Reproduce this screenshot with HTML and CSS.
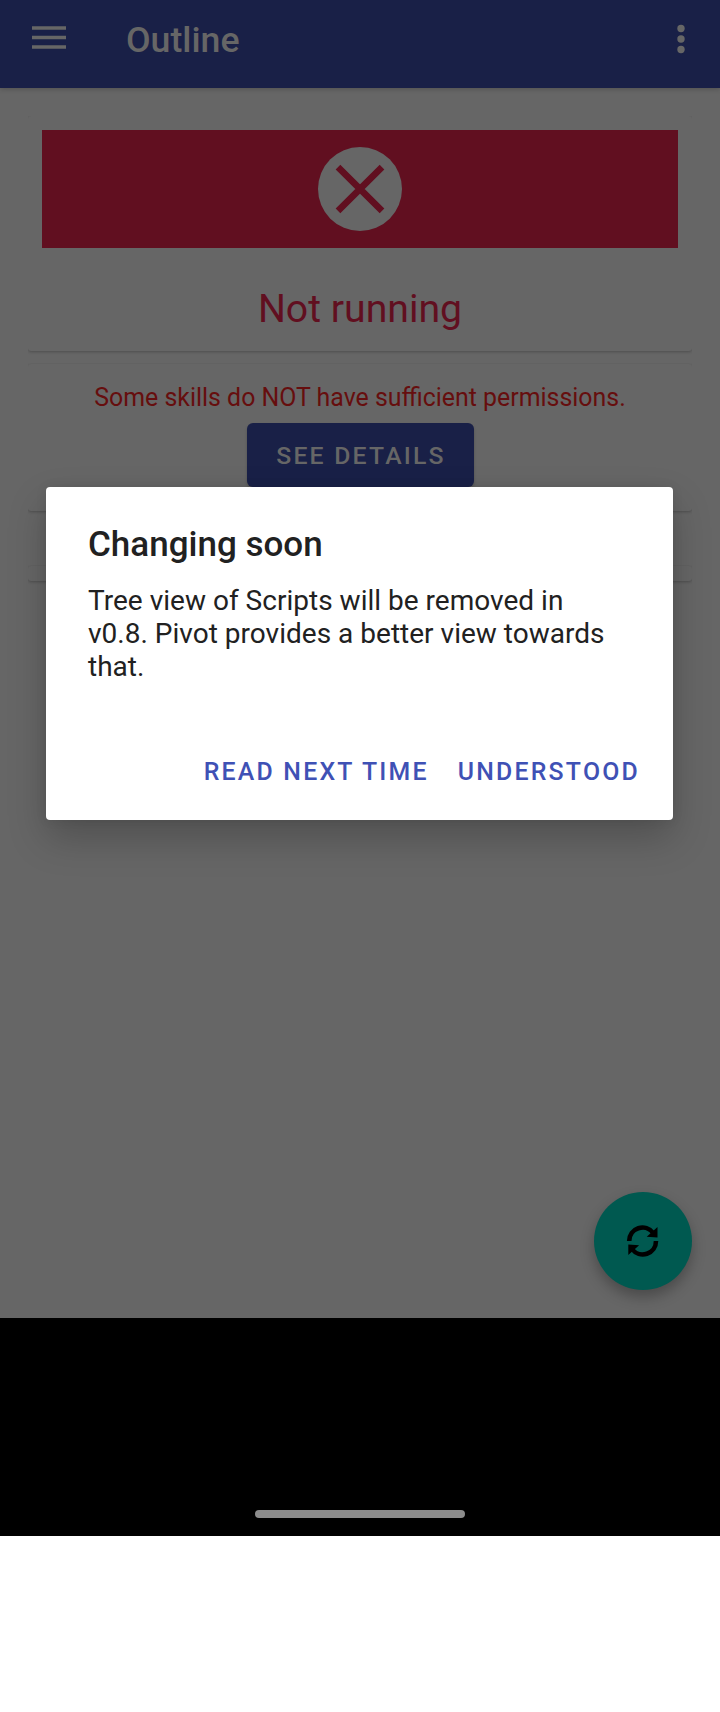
FILE: index.html
```html
<!DOCTYPE html>
<html lang="en">
<head>
<meta charset="utf-8">
<title>Outline</title>
<link rel="stylesheet" href="styles.css">
</head>
<body>
<div class="phone">
  <header class="appbar">
    <svg class="menu" width="36" height="24" viewBox="0 0 36 24"><path d="M1 2h34M1 11.500h34M1 21h34"/></svg>
    <h1 class="appbar-title">Outline</h1>
    <svg class="more" width="10" height="32" viewBox="0 0 10 32"><circle cx="5" cy="5.500" r="3.700"/><circle cx="5" cy="16" r="3.700"/><circle cx="5" cy="26.500" r="3.700"/></svg>
  </header>
  <main class="content">
    <section class="card status">
      <div class="banner">
        <svg width="84" height="84" viewBox="0 0 84 84"><circle class="disc" cx="42" cy="42" r="42"/><path class="cross" d="M20 20.200L64 63.800M64 20.200L20 63.800"/></svg>
      </div>
      <p class="state">Not running</p>
    </section>
    <section class="card permissions">
      <p class="warning">Some skills do NOT have sufficient permissions.</p>
      <button class="details">SEE DETAILS</button>
    </section>
    <section class="card empty"></section>
  </main>
  <button class="fab" aria-label="Refresh">
    <svg width="34" height="34" viewBox="0 0 34 34">
      <path class="arc" d="M3.200 17a13.300 13.300 0 0 1 24-8M30 17a13.300 13.300 0 0 1-24 8"/>
      <path d="M31.500 3v10.600l-10.800-.8zM2.300 31V20.500l10.800.7z"/>
    </svg>
  </button>
  <div class="dialog" role="dialog">
    <h2 class="dialog-title">Changing soon</h2>
    <p class="dialog-text">Tree view of Scripts will be removed in v0.8. Pivot provides a better view towards that.</p>
    <div class="actions">
      <button class="action">READ NEXT TIME</button>
      <button class="action">UNDERSTOOD</button>
    </div>
  </div>
  <footer class="navbar"><div class="pill"></div></footer>
</div>
</body>
</html>
```
FILE: styles.css
```css
* { box-sizing: border-box; margin: 0; padding: 0; }
body { background: #fff; font-family: Roboto, "Liberation Sans", sans-serif; }
button { border: 0; background: none; font: inherit; display: block; }
svg { display: block; }
.phone { position: relative; width: 720px; height: 1536px; display: flex; flex-direction: column; background: #666; }
.appbar { height: 88px; flex: none; display: flex; align-items: center; padding: 0 34px 8px 31px; background: #192047; box-shadow: 0 1px 5px rgba(0,0,0,.22); }
.menu { margin-top: -4px; fill: none; stroke: #666; stroke-width: 3.500; }
.more { margin-left: auto; margin-top: -2px; fill: #666; }
.appbar-title { margin-left: 59px; font-size: 35.700px; font-weight: 500; line-height: 80px; color: #666; }
.content { flex: 1; padding: 28px; }
.card { border-radius: 3px; background: #666; box-shadow: 0 1px 3px rgba(0,0,0,.24); clip-path: inset(-1px 0 -5px 0); }
.status { height: 235px; padding: 14px; clip-path: inset(0 0 -5px 0); }
.banner { height: 118px; display: flex; align-items: center; justify-content: center; background: #610f20; }
.disc { fill: #666; }
.cross { stroke: #610f20; stroke-width: 6.600; }
.state { margin-top: 38px; line-height: 46px; font-size: 39.200px; text-align: center; color: #610f20; }
.permissions { height: 147px; margin-top: 13px; padding-top: 18px; display: flex; flex-direction: column; align-items: center; }
.warning { font-size: 24.900px; line-height: 32px; color: #660e0e; }
.details { width: 227px; height: 64px; margin-top: 9px; padding: 1px 0 0 2px; border-radius: 6px; background: #192047; color: #666; font-size: 24.750px; font-weight: 500; letter-spacing: .0893em; box-shadow: 0 2px 3px rgba(0,0,0,.2); }
.empty { height: 15px; margin-top: 55px; }
.fab { position: absolute; left: 594px; top: 1192px; width: 98px; height: 98px; border-radius: 50%; display: flex; align-items: center; justify-content: center; background: #005950; box-shadow: 0 7px 14px rgba(0,0,0,.28); }
.arc { fill: none; stroke: #000; stroke-width: 4.600; }
.dialog { position: absolute; left: 46px; top: 487px; width: 627px; height: 333px; padding: 37px 33px 0 42px; border-radius: 4px; background: #fff; box-shadow: 0 18px 38px rgba(0,0,0,.22), 0 0 12px rgba(0,0,0,.08); color: #212121; }
.dialog-title { font-size: 35px; font-weight: 500; line-height: 42px; }
.dialog-text { max-width: 530px; margin-top: 18px; font-size: 28px; line-height: 33px; letter-spacing: .015px; }
.actions { display: flex; justify-content: flex-end; gap: 29px; margin-top: 73px; }
.action { color: #3f51b5; font-size: 24.850px; font-weight: 500; line-height: 32px; letter-spacing: .0893em; }
.navbar { height: 218px; flex: none; background: #000; padding-top: 192px; }
.pill { width: 210px; height: 8px; margin: 0 auto; border-radius: 4px; background: #8c8c8c; }
```
